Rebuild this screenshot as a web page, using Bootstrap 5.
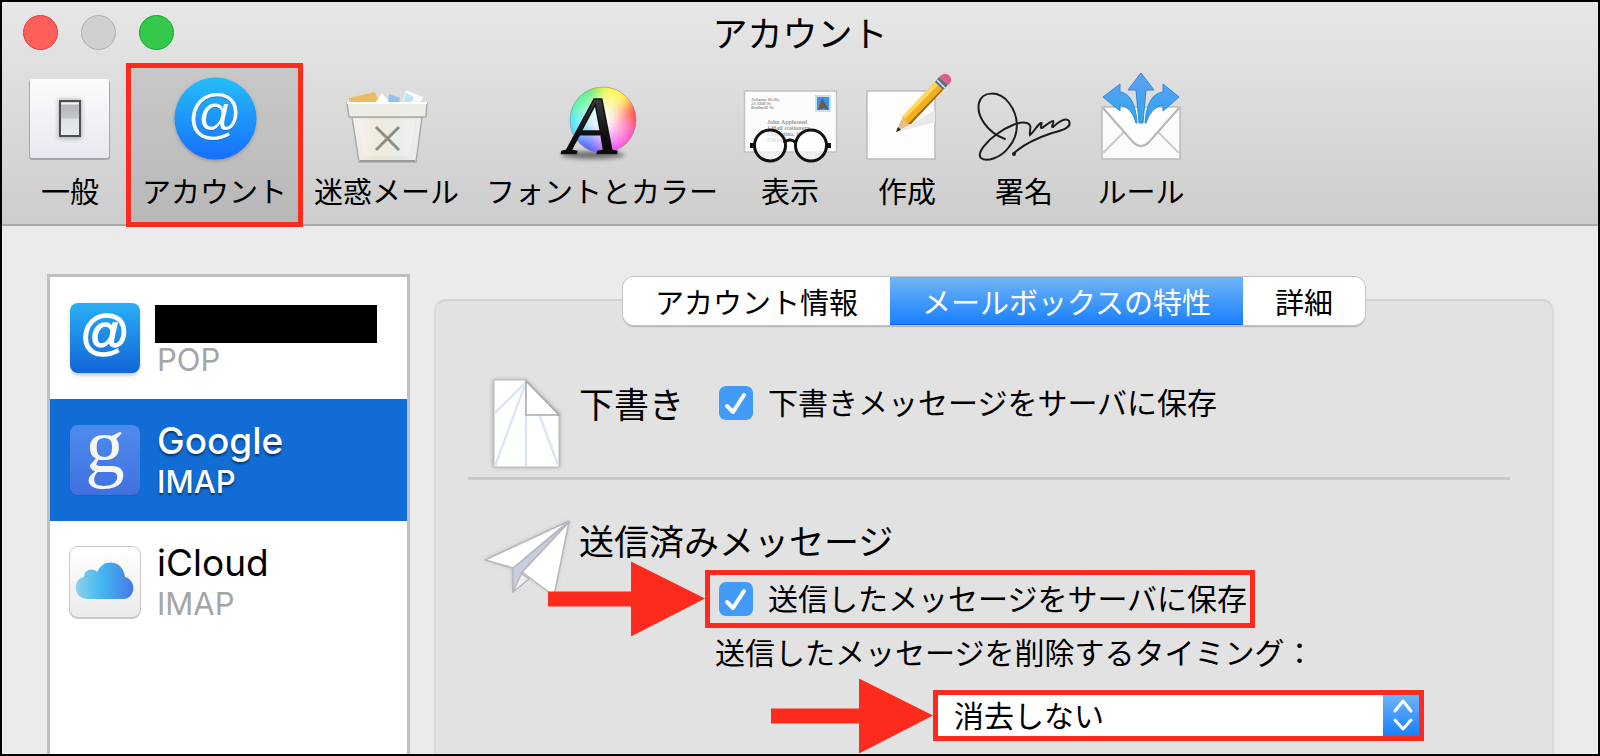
<!DOCTYPE html>
<html lang="ja">
<head>
<meta charset="utf-8">
<meta name="viewport" content="width=device-width, initial-scale=1">
<title>アカウント</title>
<link href="https://cdn.jsdelivr.net/npm/bootstrap@5.3.0/dist/css/bootstrap.min.css" rel="stylesheet">
<style>
  body { font-family: "Noto Sans CJK JP", sans-serif; font-size: 30px; line-height: 44px; color: #000; background: #ebebeb; }
  .window-frame { border: 2px solid #000; overflow: hidden; }
  .window-head { background: linear-gradient(#e7e7e7, #cdcdcd); border-bottom: 2px solid #a9a9a9; }
  .title-row { height: 60px; padding: 0 21px; }
  .lights { gap: 23px; }
  .window-title { font-size: 35px; font-weight: 400; line-height: 44px; }
  .light { width: 35px; height: 35px; border-radius: 50%; border: 1px solid; padding: 0; }
  .light-close { background: #fe5f5a; border-color: #e8393c; }
  .light-min { background: #d0d0d0; border-color: #aeaeae; }
  .light-zoom { background: #35c94b; border-color: #12a923; }
  .toolbar-row { gap: 5px; padding: 6px 12px 2px; }
  .tool { min-width: 112px; padding: 2px 11px 10px; border: 0; background: none; font-size: 29px; line-height: 44px; color: #000; white-space: nowrap; }
  .tool-art { display: flex; justify-content: center; margin: 0 -11px -2px; }
  .tool svg { width: 112px; height: 100px; overflow: visible; }
  .tool.active { background: rgba(0,0,0,.1); }
  .callout { outline: 5px solid #fd2b1d; }
  .content-row { gap: 24px; padding: 48px 44px 0 45px; }
  .accounts { width: 363px; border: 3px solid #bfbfbf; border-bottom: 0; background: #fff; font-family: Inter, "Noto Sans CJK JP", sans-serif; }
  .account { height: 122px; padding: 0 20px; gap: 17px; border: 0; border-radius: 0; background: #fff; color: #000; text-decoration: none; }
  .account.chosen { background: #116cd6; color: #fff; font-weight: 500; text-shadow: 0 2px 2px rgba(0,0,0,.5); }
  .account svg { width: 72px; height: 78px; margin: 0 -1px; flex: none; overflow: visible; text-shadow: none; }
  .account-name { font-size: 37px; line-height: 44px; }
  .account-kind { font-size: 31px; line-height: 38px; }
  .account:not(.chosen) .account-kind { color: #a5a5a5; }
  .redacted { width: 222px; height: 38px; margin: 8px 0 -2px -2px; background: #000; }
  .pane { min-width: 0; padding-top: 3px; }
  .tabs { margin-bottom: -26px; z-index: 1; }
  .tab-group { border-radius: 11px; box-shadow: 0 0 0 1px #c4c4c4, 0 2px 1px #b0b0b0; overflow: hidden; }
  .tab { height: 48px; padding: 0 32px; border: 0; background: #fff; font-size: 29px; line-height: 48px; color: #000; }
  .tab.active { background: linear-gradient(#71b5f9, #187ffd); color: #fff; box-shadow: inset 0 -1px #1560fa; }
  .panel { background: #e2e2e2; border: 2px solid #dadada; border-top-color: #d2d2d2; border-bottom: 0; border-radius: 12px 12px 0 0; padding: 76px 42px 0 32px; }
  .drafts { padding-bottom: 8px; }
  .drafts .check-row { margin-left: 35px; }
  .sent { padding-top: 34px; }
  .section-icon { width: 111px; flex: none; }
  .section-icon svg { display: block; overflow: visible; }
  .section-title { font-size: 35px; font-weight: 400; line-height: 52px; margin: 0; }
  .rule { height: 3px; background: #c8c8c8; }
  .sent-options { margin: 9px 0 0 126px; }
  .check-row { gap: 15px; }
  .check-row label { padding-bottom: 4px; }
  .form-check-input.tick { width: 34px; height: 34px; margin: 0; flex: none; border: 0; border-radius: 7px; background-color: #429bf8;
    background-image: url("data:image/svg+xml,%3Csvg xmlns='http://www.w3.org/2000/svg' viewBox='0 0 34 34'%3E%3Cpath d='M8 20l6 6L25 9' fill='none' stroke='%23fff' stroke-width='4' stroke-linecap='round' stroke-linejoin='round'/%3E%3C/svg%3E"); }
  .check-callout { margin: 5px; padding: 0 3px 0 9px; width: fit-content; }
  .arrow { right: 100%; top: 50%; transform: translateY(-50%); margin-right: 5px; }
  .timing { margin: 6px 0 0 10px; }
  .popup { width: 481px; height: 41px; margin: 22px 0 10px 233px; }
  .popup .form-select { height: 41px; padding: 0 50px 3px 16px; border: 0; border-radius: 0; background: #fff; font-size: 30px; line-height: 38px; color: #000; }
  .popup-button { right: 0; top: 0; width: 36px; height: 41px; background: linear-gradient(#6db3fa, #187ffd); pointer-events: none; }
</style>
</head>
<body>
<div class="window-frame min-vh-100 d-flex flex-column">

  <header class="window-head">
    <div class="title-row d-flex align-items-center position-relative">
      <div class="lights d-flex">
        <button class="light light-close" type="button" aria-label="閉じる"></button>
        <button class="light light-min" type="button" aria-label="しまう"></button>
        <button class="light light-zoom" type="button" aria-label="拡大"></button>
      </div>
      <h1 class="window-title position-absolute start-50 translate-middle-x m-0">アカウント</h1>
    </div>

    <nav class="toolbar-row d-flex">
      <button class="tool" type="button">
        <span class="tool-art"><svg viewBox="14 70 112 100">
          <defs>
            <linearGradient id="plate" x2="0" y2="1"><stop stop-color="#fcfcfd"/><stop offset="1" stop-color="#e6e9ef"/></linearGradient>
            <linearGradient id="rocker" x2="0" y2="1"><stop stop-color="#b0b3b6"/><stop offset=".48" stop-color="#c4c7ca"/><stop offset=".52" stop-color="#dde1e4"/><stop offset="1" stop-color="#e9edef"/></linearGradient>
            <filter id="soft" x="-50%" y="-50%" width="200%" height="200%"><feGaussianBlur stdDeviation="2"/></filter>
          </defs>
          <rect x="29" y="80" width="81" height="80" rx="3" fill="#a3a8af"/>
          <rect x="30" y="79" width="79" height="79" rx="2" fill="url(#plate)"/>
          <rect x="58" y="99" width="24" height="40" rx="2" fill="#8d9299" opacity=".6" filter="url(#soft)"/>
          <rect x="60" y="101" width="20" height="35" fill="url(#rocker)" stroke="#4b4e52" stroke-width="2"/>
          <path d="M61 103.500h18" stroke="#f2f4f5" stroke-width="2"/>
        </svg></span>
        一般
      </button>
      <button class="tool active callout" type="button">
        <span class="tool-art"><svg viewBox="159 70 112 100">
          <defs><linearGradient id="ball" x2="0" y2="1"><stop stop-color="#25bdf8"/><stop offset="1" stop-color="#166ffd"/></linearGradient></defs>
          <circle cx="215.500" cy="120" r="40.500" fill="#555" opacity=".45" filter="url(#soft)"/>
          <circle cx="215.500" cy="118.500" r="41" fill="url(#ball)"/>
          <g text-anchor="middle" font-family="Liberation Sans" font-style="italic" font-size="54">
            <text x="214" y="133" fill="#155aa8" opacity=".5">@</text>
            <text x="214" y="132" fill="#f8f8f6">@</text>
          </g>
        </svg></span>
        アカウント
      </button>
      <button class="tool" type="button">
        <span class="tool-art"><svg viewBox="331 70 112 100">
          <defs><linearGradient id="bin" x2="1" y2="0"><stop stop-color="#f1f1ef"/><stop offset=".3" stop-color="#ece6d4"/><stop offset=".7" stop-color="#e4e8e1"/><stop offset="1" stop-color="#eee"/></linearGradient></defs>
          <path d="M349 98l26-6 4 11h-29z" fill="#e9bb62"/>
          <path d="M376 102l6-9 8 10z" fill="#fff"/>
          <path d="M389 94l11 4-1 6h-11z" fill="#90c2e9"/>
          <path d="M406 90l17 7-4 7h-17z" fill="#f7fbfd"/><path d="M406 93l8 4-3 6h-8z" fill="#bfe3f3"/>
          <path d="M352 117h70l-6 45h-57z" fill="url(#bin)" stroke="#aaa" stroke-width="1.500"/>
          <path d="M358 120h57l-5 36h-46z" fill="#fff" opacity=".25"/>
          <path d="M360 161h55" stroke="#999" stroke-width="2"/>
          <path d="M347 103h80l-1 14h-77z" fill="#eeece6" stroke="#aaa" stroke-width="1.500"/>
          <path d="M347 103h80" stroke="#fff" stroke-width="2"/>
          <path d="M376 127l23 23M399 127l-23 23" stroke="#8f8e83" stroke-width="3"/>
        </svg></span>
        迷惑メール
      </button>
      <button class="tool" type="button">
        <span class="tool-art"><svg viewBox="547 70 112 100">
          <defs>
            <radialGradient id="hub"><stop stop-color="#fff"/><stop offset=".3" stop-color="#fff" stop-opacity=".8"/><stop offset="1" stop-color="#fff" stop-opacity="0"/></radialGradient>
            <filter id="blend" x="-20%" y="-20%" width="140%" height="140%"><feGaussianBlur stdDeviation="6"/></filter>
            <clipPath id="wheel"><circle cx="604" cy="120" r="33"/></clipPath>
            <linearGradient id="ink" x2="0" y2="1"><stop stop-color="#555"/><stop offset=".6" stop-color="#111"/><stop offset="1" stop-color="#000"/></linearGradient>
          </defs>
          <ellipse cx="594" cy="155" rx="32" ry="4" fill="#333" opacity=".6" filter="url(#soft)"/>
          <g clip-path="url(#wheel)"><g filter="url(#blend)">
            <path d="M603 120L570 70h40z" fill="#5df04f"/><path d="M603 120L600 70h46l-5 25z" fill="#fff44d"/>
            <path d="M603 120L650 88v44z" fill="#ff5148"/><path d="M603 120L650 130l-20 40z" fill="#ff58c8"/>
            <path d="M603 120L640 170h-45z" fill="#ec53ff"/><path d="M603 120L603 170h-50l12-24z" fill="#5264ff"/>
            <path d="M603 120L555 150v-45z" fill="#4be5ff"/><path d="M603 120L555 110l22-42z" fill="#58f5a0"/>
          </g><circle cx="604" cy="120" r="33" fill="url(#hub)"/></g>
          <circle cx="604" cy="120" r="33" fill="none" stroke="#777" stroke-opacity=".5"/>
          <text x="567" y="153" font-family="Liberation Serif" font-style="italic" font-size="83" fill="url(#ink)" stroke="#111" stroke-width="1.500">A</text>
        </svg></span>
        フォントとカラー
      </button>
      <button class="tool" type="button">
        <span class="tool-art"><svg viewBox="735 70 112 100">
          <rect x="745.500" y="91" width="92" height="61" fill="#fcfcfc" stroke="#c2c2c2" stroke-width="1.500"/>
          <g font-family="Liberation Serif" font-weight="700" fill="#999">
            <text x="752" y="101" font-size="5">Johnny Kelly</text><text x="752" y="105" font-size="5">21 Hill St</text><text x="752" y="109" font-size="5">Bodmill St</text>
            <text x="768" y="124" font-size="6">John Appleseed</text><text x="768" y="130" font-size="6">1 Half stationery</text><text x="768" y="136" font-size="6">Cupertino, C</text><text x="768" y="142" font-size="6">95014</text>
          </g>
          <rect x="817" y="96" width="14" height="15" fill="#3695ee" stroke="#cde" stroke-width="2"/><path d="M819 110l4-12 3 5 4 7-5-2z" fill="#6b5a45"/>
          <g fill="#fff" fill-opacity=".65" stroke="#111" stroke-width="3"><circle cx="771" cy="145.500" r="15.500"/><circle cx="812" cy="145.500" r="15.500"/></g>
          <path d="M785 143c3-4 9-4 12 0" fill="none" stroke="#111" stroke-width="3"/>
          <path d="M751 145.500h6M827 145.500h5" stroke="#111" stroke-width="5"/>
        </svg></span>
        表示
      </button>
      <button class="tool" type="button">
        <span class="tool-art"><svg viewBox="852 70 112 100">
          <rect x="868" y="91" width="68" height="68" fill="#fdfdfd" stroke="#bcbcbc" stroke-width="1.500"/>
          <path d="M899 132l37-22v12l-30 8z" fill="#e9e9e9"/>
          <path d="M897 132l7-16 8 8z" fill="#e7bd8b"/><path d="M897 132l2-5 3 3z" fill="#222"/>
          <path d="M904 116l32-34 8 8-32 34-4 0z" fill="#f2b021"/><path d="M904 116l32-34 3 3-33 34z" fill="#ffd75d"/><path d="M909 124l34-35 1 1-32 34z" fill="#9b6510"/>
          <path d="M936 82l4-5 9 8-5 5z" fill="#596c7b"/><path d="M938 80l8 8" stroke="#e5eef2" stroke-width="1.500"/>
          <path d="M940 77l4-3q5-1 8 4 1 4-3 7z" fill="#dc5f86"/>
        </svg></span>
        作成
      </button>
      <button class="tool" type="button">
        <span class="tool-art"><svg viewBox="968 70 112 100" fill="none" stroke="#1c1c1c" stroke-width="2" stroke-linecap="round">
          <path d="M1005 139C988 133 976 116 979 103C982 91 999 90 1009 103C1019 116 1020 134 1009 147C1000 159 986 162 981 158C976 153 988 140 997 134C1008 126 1020 121 1027 123C1033 125 1029 130 1030 135C1034 132 1037 125 1041 123C1043 122 1039 129 1042 128C1046 125 1051 121 1053 121C1055 122 1050 127 1053 127C1058 122 1066 117 1069 121C1072 127 1064 130 1052 133C1037 138 1024 144 1014 153"/>
          <circle cx="1014" cy="154" r="1"/>
        </svg></span>
        署名
      </button>
      <button class="tool" type="button">
        <span class="tool-art"><svg viewBox="1085 70 112 100">
          <defs><linearGradient id="ray" gradientUnits="userSpaceOnUse" x1="0" y1="73" x2="0" y2="123"><stop stop-color="#63a0f8"/><stop offset="1" stop-color="#2ba8ea"/></linearGradient></defs>
          <rect x="1102" y="107" width="78" height="52" fill="#fbfbfb" stroke="#bbb" stroke-width="1.500"/>
          <path d="M1103 153l21-21M1179 153l-21-21" stroke="#ccc" stroke-width="2"/>
          <path d="M1103 108l30 34q8 8 16 0l30-34" fill="#fff" stroke="#b5b5b5" stroke-width="2"/>
          <g fill="url(#ray)" stroke="#3385d2" stroke-width="1">
            <path d="M1141 73l13 17h-8l-3 33h-4l-3-33h-8z"/>
            <path d="M1103 97l17-13v8q15 2 17 31h-1q-4-16-16-18v6z"/>
            <path d="M1179 97l-16-13v8q-16 2-18 31h1q5-16 17-18v6z"/>
          </g>
        </svg></span>
        ルール
      </button>
    </nav>
  </header>

  <main class="content-row d-flex flex-grow-1">
    <aside class="accounts flex-shrink-0">
      <a class="account d-flex align-items-center" href="#">
        <svg viewBox="-1 -4 72 78">
          <defs><linearGradient id="tile" x2="0" y2="1"><stop stop-color="#29aff6"/><stop offset="1" stop-color="#1265d8"/></linearGradient></defs>
          <rect x="1" y="2" width="68" height="70" rx="8" fill="#777" opacity=".5" filter="url(#soft)"/>
          <rect width="70" height="70" rx="8" fill="url(#tile)"/>
          <text x="34" y="46" text-anchor="middle" font-family="Liberation Sans" font-style="italic" font-size="49" fill="#fff" stroke="#fff" stroke-width="1.500">@</text>
        </svg>
        <span>
          <span class="redacted d-block"></span>
          <span class="account-kind d-block">POP</span>
        </span>
      </a>
      <a class="account chosen d-flex align-items-center" href="#" aria-current="true">
        <svg viewBox="-1 -4 72 78">
          <defs><linearGradient id="gtile" x2="0" y2="1"><stop stop-color="#4e8bee"/><stop offset="1" stop-color="#4171df"/></linearGradient></defs>
          <rect width="70" height="71" rx="8" fill="#2a5bbb"/>
          <rect width="70" height="70" rx="8" fill="url(#gtile)"/>
          <text x="35" y="47" text-anchor="middle" font-family="Liberation Serif" font-weight="400" font-size="79" fill="#f6f5f0">g</text>
        </svg>
        <span>
          <span class="account-name d-block">Google</span>
          <span class="account-kind d-block">IMAP</span>
        </span>
      </a>
      <a class="account d-flex align-items-center" href="#">
        <svg viewBox="-1 -4 72 78">
          <defs>
            <linearGradient id="ctile" x2="0" y2="1"><stop stop-color="#fff"/><stop offset="1" stop-color="#ebebeb"/></linearGradient>
            <linearGradient id="sky"><stop stop-color="#8dd3ec"/><stop offset=".45" stop-color="#43b6ef"/><stop offset="1" stop-color="#437be3"/></linearGradient>
          </defs>
          <rect x="-1" y="-1" width="72" height="73" rx="9" fill="#c9c9c9"/>
          <rect x="0" y="0" width="70" height="70" rx="8" fill="url(#ctile)"/>
          <path d="M18 52C2 52 3 31 14 30C14 23 22 20 27 25C33 11 53 12 55 30C67 33 66 52 53 52z" fill="url(#sky)"/>
          <path d="M14 30c8-2 12 3 12 6M27 25q-3 4-2 9" fill="none" stroke="#69bfe6" opacity=".6"/>
        </svg>
        <span>
          <span class="account-name d-block">iCloud</span>
          <span class="account-kind d-block">IMAP</span>
        </span>
      </a>
    </aside>

    <section class="pane d-flex flex-column flex-grow-1">
      <div class="tabs d-flex justify-content-center position-relative">
        <div class="tab-group d-flex" role="tablist">
          <button class="tab" type="button" role="tab">アカウント情報</button>
          <button class="tab active" type="button" role="tab" aria-selected="true">メールボックスの特性</button>
          <button class="tab" type="button" role="tab">詳細</button>
        </div>
      </div>

      <div class="panel flex-grow-1">
        <div class="drafts d-flex align-items-start">
          <div class="section-icon">
            <svg width="111" height="92" viewBox="468 377 111 92">
              <path d="M493 380h33l34 34v53h-67z" fill="#888" opacity=".7" filter="url(#soft)"/>
              <path d="M494 380h32l33 34v53h-65z" fill="#fff" stroke="#bbb"/>
              <path d="M495 413l31-31L495 466M526 382v84M539 414l19 51" fill="none" stroke="#dce6f6" stroke-width="2.500"/>
              <path d="M526 381l33 34h-33z" fill="#fff" stroke="#aaa" stroke-width="1.500"/>
            </svg>
          </div>
          <div class="d-flex align-items-center">
            <h2 class="section-title">下書き</h2>
            <div class="check-row d-flex align-items-center">
              <input class="form-check-input tick" type="checkbox" id="save-drafts" checked>
              <label for="save-drafts">下書きメッセージをサーバに保存</label>
            </div>
          </div>
        </div>

        <div class="rule"></div>

        <div class="sent d-flex align-items-start">
          <div class="section-icon">
            <svg width="111" height="92" viewBox="468 515 111 92">
              <path d="M485 560l84-38-15 74-30-22-11 20-1-24z" fill="#888" opacity=".4" filter="url(#soft)"/>
              <g stroke="#b5b7c0" stroke-width="1.500" stroke-linejoin="round">
                <path d="M513 569l16 11-16 13z" fill="#eeeff4"/>
                <path d="M569 523l-15 74-32-24z" fill="#fff"/>
                <path d="M569 523l-56 46v24l9-20z" fill="#c9cddd"/>
                <path d="M569 522l-84 39 28 8z" fill="#fff"/>
              </g>
            </svg>
          </div>
          <div>
            <h2 class="section-title">送信済みメッセージ</h2>
            <div class="sent-options">
              <div class="check-row check-callout callout d-flex align-items-center position-relative">
                <svg class="arrow position-absolute" width="157" height="75" viewBox="0 0 157 75"><path d="M0 30h83V0l74 37-74 38V45H0z" fill="#fd2b1d"/></svg>
                <input class="form-check-input tick" type="checkbox" id="save-sent" checked>
                <label for="save-sent">送信したメッセージをサーバに保存</label>
              </div>
              <label class="timing d-block text-nowrap" for="delete-when">送信したメッセージを削除するタイミング：</label>
              <div class="popup callout position-relative">
                <svg class="arrow position-absolute" width="162" height="75" viewBox="0 0 162 75"><path d="M0 30h88V0l74 37-74 38V45H0z" fill="#fd2b1d"/></svg>
                <select class="form-select" id="delete-when"><option>消去しない</option></select>
                <span class="popup-button position-absolute">
                  <svg class="d-block" width="36" height="41" viewBox="0 0 36 41" fill="none" stroke="#fff" stroke-width="3" stroke-linecap="round" stroke-linejoin="round"><path d="M12 16l8-10 8 10M12 25l8 9 8-9"/></svg>
                </span>
              </div>
            </div>
          </div>
        </div>
      </div>
    </section>
  </main>
</div>
<script src="https://cdn.jsdelivr.net/npm/bootstrap@5.3.0/dist/js/bootstrap.bundle.min.js"></script>
</body>
</html>
